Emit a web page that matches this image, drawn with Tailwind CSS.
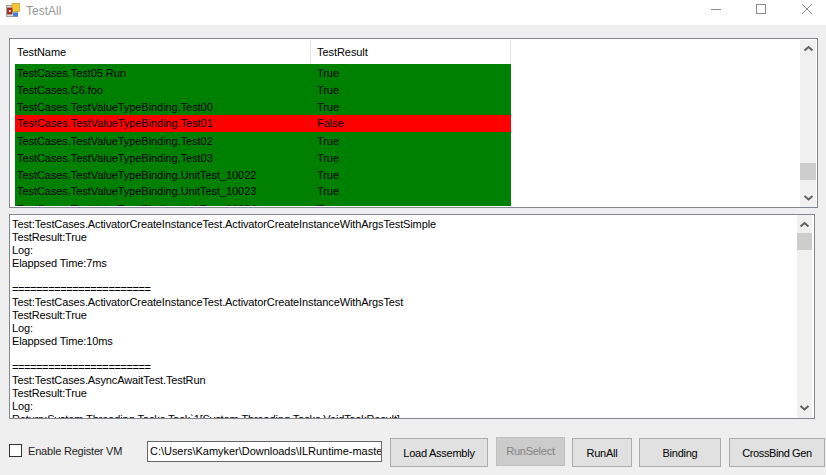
<!DOCTYPE html>
<html><head><meta charset="utf-8"><script src="https://cdn.jsdelivr.net/npm/@tailwindcss/browser@4"></script></head>
<body class="overflow-hidden bg-[#f0f0f0]">
<div class="w-[826px] h-[475px] flex flex-col overflow-hidden font-['Liberation_Sans',sans-serif] text-[11px] tracking-[-0.06px] text-black leading-[13px] bg-[#efefef]">
  <!-- title bar -->
  <div class="h-[25px] bg-white flex items-center shrink-0">
    <svg class="ml-[6px] mb-[6px] shrink-0" width="14" height="14" viewBox="0 0 14 14"><rect x="0.5" y="2.5" width="11" height="11" fill="#d8d8d8" stroke="#a0a0a0"/><rect x="6" y="0.5" width="7.5" height="8" fill="#f2c531" stroke="#b8902a" stroke-width=".6"/><rect x="1.5" y="5" width="4.5" height="6" fill="#b92a1e" stroke="#7a1a12" stroke-width=".6"/><rect x="3" y="7" width="1.6" height="2" fill="#fff"/><rect x="7" y="9.5" width="5" height="4" fill="#4a80d0"/></svg>
    <span class="ml-[6px] mb-[3px] text-[#9a9a9a] text-[12px] tracking-normal">TestAll</span>
    <div class="ml-auto flex items-center">
      <svg width="46" height="25" viewBox="0 0 46 25"><path d="M23 9.5H33" stroke="#8a8a8a" stroke-width="1"/></svg>
      <svg width="46" height="25" viewBox="0 0 46 25"><rect x="22.5" y="4.5" width="9" height="9" fill="none" stroke="#8a8a8a"/></svg>
      <svg width="46" height="25" viewBox="0 0 46 25"><path d="M22 4L32 14M32 4L22 14" stroke="#8a8a8a" fill="none"/></svg>
    </div>
  </div>
  <div class="flex-1 flex flex-col pl-[9px] pt-[13px] min-h-0">
    <!-- list view -->
    <div class="w-[809px] h-[170px] border border-[#82878f] bg-white flex shrink-0 overflow-hidden pt-px">
      <div class="w-[790px] pl-[5px] h-full overflow-hidden">
        <div class="flex h-[24px] w-[496px]">
          <div class="w-[296px] border-r border-[#e5e5e5] pl-[2px] flex items-center">TestName</div>
          <div class="w-[200px] border-r border-[#e5e5e5] pl-[6px] flex items-center">TestResult</div>
        </div>
        <div class="w-[496px] h-[142px] overflow-hidden flex flex-col">
          <div class="flex h-[17px] shrink-0 pt-[2px] items-center bg-[#008000]"><span class="w-[296px] pl-[2px]">TestCases.Test05.Run</span><span class="pl-[6px]">True</span></div>
          <div class="flex h-[17px] shrink-0 pt-[2px] items-center bg-[#008000]"><span class="w-[296px] pl-[2px]">TestCases.C6.foo</span><span class="pl-[6px]">True</span></div>
          <div class="flex h-[17px] shrink-0 pt-[1px] items-center bg-[#008000]"><span class="w-[296px] pl-[2px]">TestCases.TestValueTypeBinding.Test00</span><span class="pl-[6px]">True</span></div>
          <div class="flex h-[17px] shrink-0 items-center bg-[#ff0000]"><span class="w-[296px] pl-[2px]">TestCases.TestValueTypeBinding.Test01</span><span class="pl-[6px]">False</span></div>
          <div class="flex h-[17px] shrink-0 pt-[2px] items-center bg-[#008000]"><span class="w-[296px] pl-[2px]">TestCases.TestValueTypeBinding.Test02</span><span class="pl-[6px]">True</span></div>
          <div class="flex h-[17px] shrink-0 pt-[2px] items-center bg-[#008000]"><span class="w-[296px] pl-[2px]">TestCases.TestValueTypeBinding.Test03</span><span class="pl-[6px]">True</span></div>
          <div class="flex h-[17px] shrink-0 pt-[2px] items-center bg-[#008000]"><span class="w-[296px] pl-[2px]">TestCases.TestValueTypeBinding.UnitTest_10022</span><span class="pl-[6px]">True</span></div>
          <div class="flex h-[17px] shrink-0 items-center bg-[#008000]"><span class="w-[296px] pl-[2px]">TestCases.TestValueTypeBinding.UnitTest_10023</span><span class="pl-[6px]">True</span></div>
          <div class="flex h-[17px] shrink-0 pt-[2px] items-center bg-[#008000]"><span class="w-[296px] pl-[2px]">TestCases.TestValueTypeBinding.UnitTest_10024</span><span class="pl-[6px]">True</span></div>
        </div>
      </div>
      <div class="w-[16px] bg-[#f0f0f0] h-full flex flex-col items-center shrink-0">
        <svg class="mt-[5px]" width="15" height="8" viewBox="0 0 15 8"><path d="M3.5 5.5L7.5 2L11.5 5.5" fill="none" stroke="#606060" stroke-width="2"/></svg>
        <div class="w-[16px] h-[17px] bg-[#cdcdcd] mt-[110px]"></div>
        <svg class="mt-[14px]" width="15" height="8" viewBox="0 0 15 8"><path d="M3.5 2L7.5 5.5L11.5 2" fill="none" stroke="#606060" stroke-width="2"/></svg>
      </div>
    </div>
    <!-- log -->
    <div class="w-[806px] h-[205px] mt-[6px] border border-[#82878f] bg-white flex shrink-0 overflow-hidden">
      <div class="w-[787px] h-full overflow-hidden pl-[2px] pt-[3px] leading-[13px] whitespace-nowrap tracking-[-0.12px]"><div>Test:TestCases.ActivatorCreateInstanceTest.ActivatorCreateInstanceWithArgsTestSimple</div><div>TestResult:True</div><div>Log:</div><div>Elappsed Time:7ms</div><div>&nbsp;</div><div class="tracking-[-0.4px]">=======================</div><div>Test:TestCases.ActivatorCreateInstanceTest.ActivatorCreateInstanceWithArgsTest</div><div>TestResult:True</div><div>Log:</div><div>Elappsed Time:10ms</div><div>&nbsp;</div><div class="tracking-[-0.4px]">=======================</div><div>Test:TestCases.AsyncAwaitTest.TestRun</div><div>TestResult:True</div><div>Log:</div><div>Return:System.Threading.Tasks.Task`1[System.Threading.Tasks.VoidTaskResult]</div></div>
      <div class="w-[15px] bg-[#f0f0f0] h-full flex flex-col items-center shrink-0">
        <svg class="mt-[6px]" width="15" height="8" viewBox="0 0 15 8"><path d="M3.5 5.5L7.5 2L11.5 5.5" fill="none" stroke="#606060" stroke-width="2"/></svg>
        <div class="w-[15px] h-[17px] bg-[#cdcdcd] mt-[4px]"></div>
        <svg class="mt-[154px]" width="15" height="8" viewBox="0 0 15 8"><path d="M3.5 2L7.5 5.5L11.5 2" fill="none" stroke="#606060" stroke-width="2"/></svg>
      </div>
    </div>
    <!-- bottom -->
    <div class="flex items-start mt-[19px] shrink-0 tracking-[-0.25px]">
      <div class="w-[13px] h-[13px] border border-[#333] bg-white mt-[6px] shrink-0"></div>
      <span class="ml-[6px] mt-[7px] w-[119px] text-[#222] tracking-[-0.2px]">Enable Register VM</span>
      <div class="w-[235px] h-[21px] mt-[3px] border border-[#666] bg-white flex items-center pl-[2px] overflow-hidden whitespace-nowrap"><span class="w-[231px] overflow-hidden tracking-[-0.03px]">C:\Users\Kamyker\Downloads\ILRuntime-master</span></div>
      <div class="ml-[8px] w-[98px] h-[29px] pt-px border border-[#adadad] bg-[#e1e1e1] flex items-center justify-center">Load Assembly</div>
      <div class="ml-[8px] w-[69px] h-[29px] -mt-px border border-[#bfbfbf] bg-[#cccccc] text-[#838383] flex items-center justify-center">RunSelect</div>
      <div class="ml-[7px] w-[60px] h-[29px] pt-px border border-[#adadad] bg-[#e1e1e1] flex items-center justify-center">RunAll</div>
      <div class="ml-[7px] w-[82px] h-[29px] pt-px border border-[#adadad] bg-[#e1e1e1] flex items-center justify-center">Binding</div>
      <div class="ml-[8px] w-[96px] h-[29px] pt-px border border-[#adadad] bg-[#e1e1e1] flex items-center justify-center tracking-[-0.4px]">CrossBind Gen</div>
    </div>
  </div>
</div>
</body></html>
